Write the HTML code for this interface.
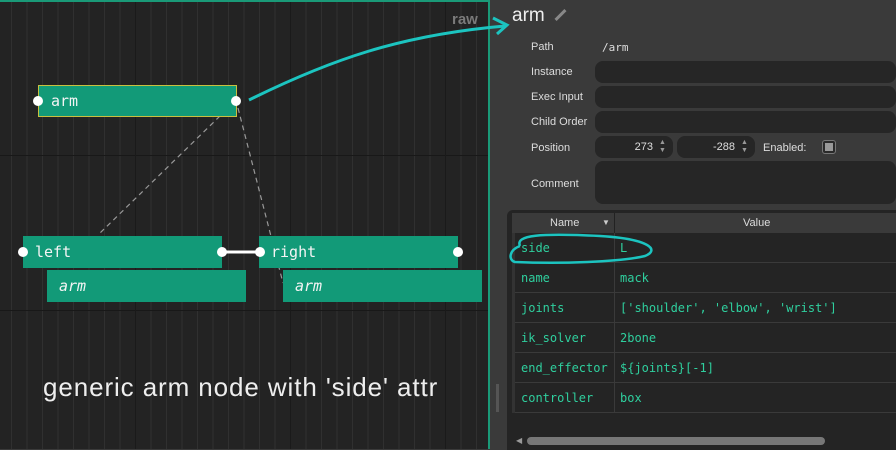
<!DOCTYPE html>
<html><head><style>
*{margin:0;padding:0;box-sizing:border-box}
body{width:896px;height:449px;overflow:hidden;background:#3a3a3a;font-family:"Liberation Sans",sans-serif;position:relative}
.canvas{position:absolute;left:0;top:0;width:490px;height:449px;background:#232323;
background-image:repeating-linear-gradient(90deg,transparent 0 11px,#303030 11px 12px,transparent 12px 15.5px);border-right:2px solid #1a9a78;border-top:2px solid #1a9a78;overflow:hidden}
.hl{position:absolute;left:0;width:490px;height:1px;background:#181818}
.vl{position:absolute;top:0;height:449px;width:1px;background:#1a1a1a}
.node{position:absolute;background:#129a78;color:#f4f4f4;font-family:"DejaVu Sans Mono","Liberation Mono",monospace;font-size:15px;line-height:33px;padding-left:12px}
.node i{font-style:italic}
.pin{position:absolute;width:10px;height:10px;border-radius:50%;background:#fff}
.lbl{position:absolute;color:#ddd;font-size:11px;left:531px}
.field{position:absolute;background:#262626;border-radius:8px;left:595px;right:0;height:22px}
.mono{font-family:"DejaVu Sans Mono","Liberation Mono",monospace}
.tbl{position:absolute;left:507px;top:210px;right:0;height:240px;background:#242424;border-radius:6px 0 0 0}
.row{position:absolute;left:512px;right:0;height:30px;border-bottom:1px solid #3a3a3a;color:#2fcf9e;font-size:12px;line-height:30px}
.row span{position:absolute;left:9px}
.row b{font-weight:normal;position:absolute;left:108px}
.spin{position:absolute;color:#999;font-size:7px;line-height:8px}
</style></head><body>
<div class="canvas">
<div class="hl" style="top:153px"></div><div class="hl" style="top:308px"></div>
<div class="vl" style="left:135px"></div><div class="vl" style="left:290px"></div><div class="vl" style="left:445px"></div>
<div style="position:absolute;left:452px;top:9px;color:#7a7a7a;font-weight:bold;font-size:15px">raw</div>
</div>
<svg width="896" height="449" style="position:absolute;left:0;top:0">
<line x1="220" y1="116" x2="98" y2="235" stroke="#999" stroke-dasharray="5,4" stroke-width="1.2"/>
<line x1="238" y1="108" x2="283" y2="283" stroke="#999" stroke-dasharray="5,4" stroke-width="1.2"/>
<line x1="222" y1="252" x2="260" y2="252" stroke="#fff" stroke-width="3"/>
<path d="M249 100 C330 60 400 35 505 26" stroke="#1cc4c0" stroke-width="3" fill="none"/>
<path d="M493 18 L507 25 L497 34" stroke="#1cc4c0" stroke-width="3" fill="none"/>
</svg>
<div class="node" style="left:38px;top:85px;width:199px;height:32px;border:1px solid #c8c040;line-height:31px">arm</div>
<div class="node" style="left:23px;top:236px;width:199px;height:32px">left</div>
<div class="node" style="left:47px;top:270px;width:199px;height:32px"><i>arm</i></div>
<div class="node" style="left:259px;top:236px;width:199px;height:32px">right</div>
<div class="node" style="left:283px;top:270px;width:199px;height:32px"><i>arm</i></div>
<div class="pin" style="left:33px;top:96px"></div><div class="pin" style="left:231px;top:96px"></div>
<div class="pin" style="left:18px;top:247px"></div><div class="pin" style="left:217px;top:247px"></div>
<div class="pin" style="left:255px;top:247px"></div><div class="pin" style="left:453px;top:247px"></div>
<div style="position:absolute;left:43px;top:372px;color:#eee;font-size:26px;letter-spacing:0.9px">generic arm node with 'side' attr</div>

<div style="position:absolute;left:512px;top:5px;color:#eee;font-size:19px">arm</div>
<div style="position:absolute;left:559px;top:8px;width:3px;height:14px;background:#888;transform:rotate(45deg)"></div>
<div class="lbl" style="top:41px">Path</div><div class="mono" style="position:absolute;left:602px;top:41px;color:#ddd;font-size:11px">/arm</div>
<div class="lbl" style="top:66px">Instance</div><div class="field" style="top:61px"></div>
<div class="lbl" style="top:91px">Exec Input</div><div class="field" style="top:86px"></div>
<div class="lbl" style="top:116px">Child Order</div><div class="field" style="top:111px"></div>
<div class="lbl" style="top:142px">Position</div>
<div class="field" style="top:136px;width:78px;right:auto;color:#ddd;font-size:11px;line-height:22px;text-align:right;padding-right:20px">273</div>
<div class="spin" style="left:659px;top:139px">▲<br>▼</div>
<div class="field" style="top:136px;left:677px;width:78px;right:auto;color:#ddd;font-size:11px;line-height:22px;text-align:right;padding-right:20px">-288</div>
<div class="spin" style="left:741px;top:139px">▲<br>▼</div>
<div class="lbl" style="top:142px;left:763px">Enabled:</div>
<div style="position:absolute;left:822px;top:140px;width:14px;height:14px;border:1px solid #777;border-radius:3px;background:#2a2a2a"><div style="margin:2px;width:8px;height:8px;background:#999"></div></div>
<div class="lbl" style="top:178px">Comment</div><div class="field" style="top:161px;height:43px"></div>
<div class="tbl"></div>
<div style="position:absolute;left:512px;top:213px;right:0;height:20px;background:#3a3a3a;color:#ddd;font-size:11px;line-height:20px">
<span style="position:absolute;left:38px">Name</span><span style="position:absolute;left:90px;color:#ccc;font-size:8px">▼</span>
<span style="position:absolute;left:102px;top:0;width:1px;height:20px;background:#222"></span>
<span style="position:absolute;left:231px">Value</span></div>
<div class="row mono" style="top:233px"><span>side</span><b>L</b></div>
<div class="row mono" style="top:263px"><span>name</span><b>mack</b></div>
<div class="row mono" style="top:293px"><span>joints</span><b>['shoulder', 'elbow', 'wrist']</b></div>
<div class="row mono" style="top:323px"><span>ik_solver</span><b>2bone</b></div>
<div class="row mono" style="top:353px"><span>end_effector</span><b>${joints}[-1]</b></div>
<div class="row mono" style="top:383px"><span>controller</span><b>box</b></div>
<div style="position:absolute;left:614px;top:233px;width:1px;height:180px;background:#3a3a3a"></div>
<div style="position:absolute;left:512px;top:233px;width:3px;height:180px;background:#333"></div>
<svg width="896" height="449" style="position:absolute;left:0;top:0">
<path d="M520 246 C515 235 540 233 600 236 C650 239 660 250 645 256 C620 262 560 264 515 262 C508 260 509 250 520 246" stroke="#1cc4c0" stroke-width="2.5" fill="none"/>
</svg>
<div style="position:absolute;left:527px;top:437px;width:298px;height:8px;border-radius:4px;background:#777"></div>
<div style="position:absolute;left:516px;top:436px;color:#999;font-size:8px">◀</div>
<div style="position:absolute;left:496px;top:384px;width:3px;height:28px;background:#555"></div>
</body></html>
